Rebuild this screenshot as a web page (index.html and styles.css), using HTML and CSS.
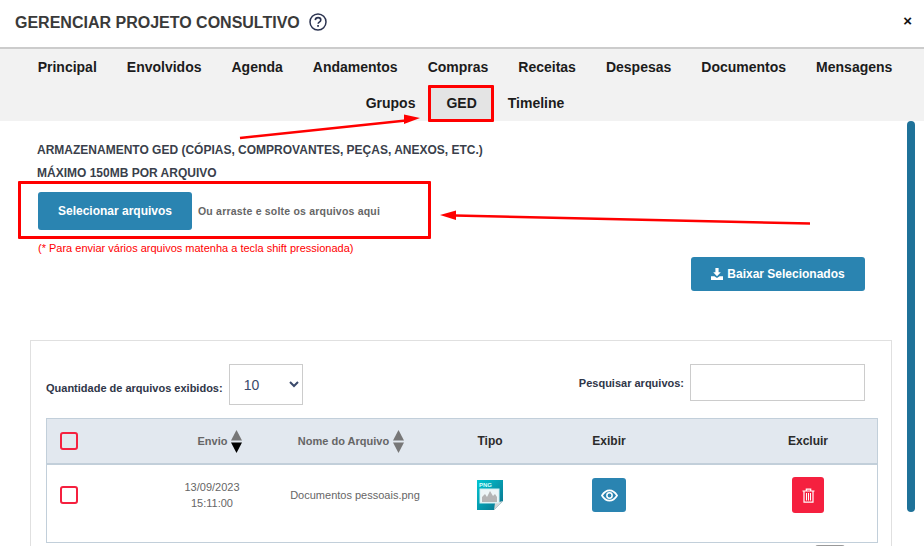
FILE: index.html
```html
<!DOCTYPE html>
<html lang="pt-BR">
<head>
<meta charset="utf-8">
<title>Gerenciar Projeto Consultivo</title>
<link rel="stylesheet" href="styles.css">
</head>
<body>
<div class="modal">
  <header class="modal-head">
    <h1 class="modal-title">GERENCIAR PROJETO CONSULTIVO</h1>
    <svg class="help-icon" viewBox="0 0 18 18" width="18" height="18"><circle cx="9" cy="9" r="8" fill="none" stroke="#2b3350" stroke-width="1.500"/><path d="M6.300 7.100C6.400 5.500 7.600 4.600 9.100 4.600c1.600 0 2.700 1 2.700 2.300 0 1.100-.7 1.700-1.500 2.200-.8.500-1.100.9-1.100 1.700" fill="none" stroke="#2b3350" stroke-width="1.600"/><rect x="8.200" y="12" width="1.700" height="1.800" fill="#2b3350"/></svg>
    <span class="close">×</span>
  </header>
  <nav class="tabs">
    <a class="tab">Principal</a>
    <a class="tab">Envolvidos</a>
    <a class="tab">Agenda</a>
    <a class="tab">Andamentos</a>
    <a class="tab">Compras</a>
    <a class="tab">Receitas</a>
    <a class="tab">Despesas</a>
    <a class="tab">Documentos</a>
    <a class="tab">Mensagens</a>
    <a class="tab">Grupos</a>
    <a class="tab active">GED</a>
    <a class="tab">Timeline</a>
  </nav>
  <main class="content">
    <p class="heading">ARMAZENAMENTO GED (CÓPIAS, COMPROVANTES, PEÇAS, ANEXOS, ETC.)</p>
    <p class="heading second">MÁXIMO 150MB POR ARQUIVO</p>
    <div class="upload">
      <button class="btn select-btn">Selecionar arquivos</button>
      <span class="drop-text">Ou arraste e solte os arquivos aqui</span>
    </div>
    <p class="hint">(* Para enviar vários arquivos matenha a tecla shift pressionada)</p>
    <div class="download-row">
      <button class="btn download-btn">
        <svg viewBox="0 0 12 12" width="12" height="12"><path fill="#fff" d="M4.400 0h3.200v4.300h2.200L6 8.200 2.200 4.300h2.200zM0 8.200h3.400L6 9.900l2.600-1.700H12V12H0z"/></svg>
        Baixar Selecionados
      </button>
    </div>
    <section class="panel">
      <div class="filters">
        <label class="filter-label qty">Quantidade de arquivos exibidos:</label>
        <select class="qty-select"><option>10</option></select>
        <label class="filter-label search-label">Pesquisar arquivos:</label>
        <input class="search" type="text">
      </div>
      <div class="table">
        <div class="row head">
          <div class="cell first"><span class="check"></span></div>
          <div class="cell sort envio">Envio
            <svg class="sort-icon" viewBox="0 0 11 23" width="11" height="23"><path fill="#777" d="M5.500 0L11 10.500H0z"/><path fill="#000" d="M0 12.500h11L5.500 23z"/></svg>
          </div>
          <div class="cell sort">Nome do Arquivo
            <svg class="sort-icon" viewBox="0 0 11 23" width="11" height="23"><path fill="#777" d="M5.500 0L11 10.500H0z"/><path fill="#777" d="M0 12.500h11L5.500 23z"/></svg>
          </div>
          <div class="cell dark">Tipo</div>
          <div class="cell dark">Exibir</div>
          <div class="cell dark last">Excluir</div>
        </div>
        <div class="row body">
          <div class="cell first"><span class="check"></span></div>
          <div class="cell date">13/09/2023<br>15:11:00</div>
          <div class="cell name">Documentos pessoais.png</div>
          <div class="cell">
            <svg class="file-icon" viewBox="0 0 28 31" width="28" height="31">
              <defs><linearGradient id="g" x1="0" y1="0" x2="1" y2="1"><stop offset="0" stop-color="#00c6d2"/><stop offset="1" stop-color="#0b6f8a"/></linearGradient></defs>
              <path fill="url(#g)" d="M1 0h26v21l-9 9H1z"/>
              <path fill="#d5d5d5" d="M27 21l-9 9 1-7z"/>
              <rect x="4" y="9" width="19" height="14" fill="#eef6f7" stroke="#cfeef2"/>
              <path fill="#b5b5b5" d="M6 22v-5l3-3 2 3 3-6 3 5 2-2 2 3v5z"/>
              <text x="3" y="7" class="file-label">PNG</text>
            </svg>
          </div>
          <div class="cell">
            <button class="icon-btn view">
              <svg viewBox="0 0 18 13" width="17" height="13"><path fill="none" stroke="#fff" stroke-width="1.800" d="M1 6.500c2-3.300 5-5.400 8-5.400s6 2.100 8 5.400c-2 3.300-5 5.400-8 5.400S3 9.800 1 6.500z"/><circle cx="9" cy="6.500" r="2.800" fill="none" stroke="#fff" stroke-width="1.600"/></svg>
            </button>
          </div>
          <div class="cell last">
            <button class="icon-btn trash">
              <svg viewBox="0 0 13 15" width="13" height="15"><path fill="none" stroke="#fff" stroke-width="1.200" d="M.5 3h12M4.300 3V1.200h4.400V3M2 3v11.200h9V3"/><path stroke="#fff" d="M4.500 5v7.500M6.500 5v7.500M8.500 5v7.500"/></svg>
            </button>
          </div>
        </div>
      </div>
      <div class="pager"><span class="pager-top"></span></div>
    </section>
  </main>
  <div class="scrollbar"></div>
  <span class="mark tab-mark"></span>
  <span class="mark upload-mark"></span>
  <svg class="arrows" viewBox="0 0 924 546" width="924" height="546">
    <path d="M240 138L406 120.500" stroke="#f00" stroke-width="2.500" fill="none"/>
    <path d="M420 118L404 114.500V124z" fill="#f00"/>
    <path d="M810 223.500L455 215.500" stroke="#f00" stroke-width="2.500" fill="none"/>
    <path d="M440 215L456 210.500V220z" fill="#f00"/>
  </svg>
</div>
</body>
</html>
```

FILE: styles.css
```css
* { box-sizing: border-box; }
html, body { margin: 0; height: 546px; overflow: hidden; background: #fff; }
body { font-family: "Liberation Sans", Arial, sans-serif; color: #333; }
p, h1 { margin: 0; }
button { font-family: inherit; border: 0; }

.modal { position: relative; width: 924px; height: 546px; overflow: hidden; }

.modal-head { height: 49px; padding: 0 12px 0 15px; display: flex; align-items: center; border-bottom: 2px solid #ccc; }
.modal-title { font-size: 16px; font-weight: bold; color: #3a3a3a; margin-top: -1px; }
.help-icon { margin-left: 9px; margin-top: -4px; }
.close { margin-left: auto; font-size: 15px; font-weight: bold; color: #111; margin-top: -7px; }

.tabs { height: 72px; padding-left: 6px; background: #f2f2f2; display: flex; flex-wrap: wrap; justify-content: center; align-content: flex-start; }
.tab { height: 36px; padding: 0 15px; display: flex; align-items: center; font-size: 14px; font-weight: bold; color: #1c1c1c; }
.tab.active { background: #e4e4e4; border-bottom: 2px solid #2a84b1; padding: 2px 16px 0; }

.content { height: 425px; padding: 20px 32px 0 30px; }
.heading { font-size: 12px; font-weight: bold; color: #3a3f4b; padding-left: 7px; line-height: 18px; }
.heading.second { margin-top: 5px; }

.upload { display: flex; align-items: center; padding-left: 8px; margin-top: 10px; height: 38px; }
.btn { background: #2a84b1; color: #fff; font-weight: bold; font-size: 12px; border-radius: 3px; }
.select-btn { width: 154px; height: 38px; }
.drop-text { margin-left: 6px; font-size: 10.500px; font-weight: bold; color: #666; letter-spacing: .2px; }
.hint { margin-top: 11px; padding-left: 8px; font-size: 11px; line-height: 14px; color: #f00; }

.download-row { display: flex; justify-content: flex-end; padding-right: 27px; margin-top: 2px; height: 34px; }
.download-btn { width: 174px; height: 34px; display: flex; align-items: center; justify-content: center; gap: 4px; }

.panel { margin-top: 49px; width: 862px; height: 300px; border: 1px solid #e0e0e0; border-bottom: 0; padding: 23px 15px 0; }
.filters { height: 54px; position: relative; display: flex; align-items: flex-start; padding-right: 11px; }
.filter-label { font-size: 11px; font-weight: bold; color: #2f3648; }
.qty { margin-top: 18px; }
.qty-select { width: 74px; height: 41px; margin-left: 6px; border: 1px solid #ccc; background: #fff; font-family: inherit; font-size: 14px; color: #3b4a6b; padding-left: 10px; }
.search-label { margin-left: auto; margin-top: 13px; }
.search { width: 175px; height: 37px; margin-left: 6px; border: 1px solid #ccc; background: #fff; }

.table { width: 832px; height: 125px; border: 1px solid #c2cfda; }
.row { display: grid; grid-template-columns: 101px 128px 150px 128px 110px 214px; }
.row.head { height: 46px; background: #e2e8ef; border-bottom: 2px solid #c2cfda; }
.cell { display: flex; align-items: center; justify-content: center; font-size: 11px; color: #666; }
.cell.first { justify-content: flex-start; padding-left: 13px; }
.cell.last { padding-left: 74px; }
.sort { font-weight: bold; gap: 4px; }
.sort.envio { padding-left: 16px; }
.dark { font-weight: bold; color: #2b2b2b; font-size: 12px; }
.check { width: 18px; height: 18px; border: 2px solid #f5203f; border-radius: 3px; background: transparent; display: block; }
.sort-icon { display: block; }
.row.body { height: 60px; }
.date { line-height: 16px; text-align: center; }
.name { padding-left: 8px; }
.file-label { font-family: "Liberation Sans", sans-serif; font-size: 6px; font-weight: bold; fill: #d8ffff; }
.icon-btn { width: 34px; height: 34px; border-radius: 3px; display: flex; align-items: center; justify-content: center; padding: 0; }
.view { background: #2a84b1; }
.trash { background: #f5203f; height: 36px; width: 32px; }

.pager { display: flex; justify-content: flex-end; padding-right: 31px; margin-top: 2px; }
.pager-top { width: 30px; height: 4px; background: #999; border-radius: 3px 3px 0 0; }

.scrollbar { position: absolute; left: 907px; top: 121px; width: 8px; height: 391px; background: #1f7299; border-radius: 4px; }
.mark { position: absolute; border: 3px solid #f00; border-radius: 1px; }
.tab-mark { left: 428px; top: 85px; width: 66px; height: 37px; }
.upload-mark { left: 18px; top: 181px; width: 413px; height: 58px; }
.arrows { position: absolute; left: 0; top: 0; pointer-events: none; }
```
